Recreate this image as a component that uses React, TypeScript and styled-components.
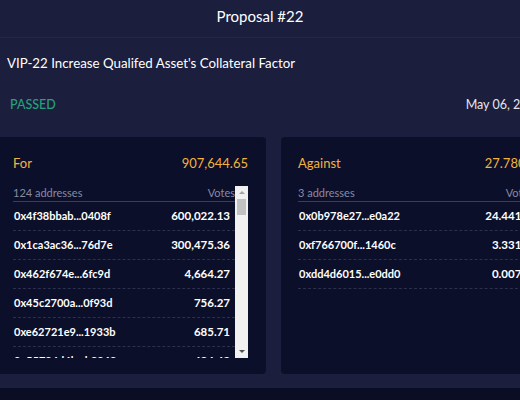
import React from 'react';
import styled, { createGlobalStyle } from 'styled-components';

interface vote {
  address: string
  votes: string
}

const forVotes: vote[] = [
  { address: '0x4f38bbab...0408f', votes: '600,022.13' },
  { address: '0x1ca3ac36...76d7e', votes: '300,475.36' },
  { address: '0x462f674e...6fc9d', votes: '4,664.27' },
  { address: '0x45c2700a...0f93d', votes: '756.27' },
  { address: '0xe62721e9...1933b', votes: '685.71' },
  { address: '0x55784d4b...b8868', votes: '424.42' },
  { address: '0x8a21c0fe...93b1a', votes: '301.05' },
];

const againstVotes: vote[] = [
  { address: '0x0b978e27...e0a22', votes: '24.4418' },
  { address: '0xf766700f...1460c', votes: '3.3312' },
  { address: '0xdd4d6015...e0dd0', votes: '0.0075' },
];

const GlobalStyle = createGlobalStyle`
  body {
    margin: 0;
    background: #0b0d25;
    font-family: Lato, "Open Sans", sans-serif;
  }
`;

const App: React.FC = () => {
  return (
    <>
      <GlobalStyle />
      <Header>Proposal #22</Header>
      <Panel>
        <Inner>
          <Title>VIP-22 Increase Qualifed Asset's Collateral Factor</Title>
          <StatusRow>
            <Status>PASSED</Status>
            <DateText>May 06, 2021</DateText>
          </StatusRow>
          <Cards>
            <VoteCard label="For" total="907,644.65" count={124} list={forVotes} scroll />
            <VoteCard label="Against" total="27.7805" count={3} list={againstVotes} />
          </Cards>
        </Inner>
      </Panel>
    </>
  );
}

const VoteCard: React.FC<{label: string, total: string, count: number, list: vote[], scroll?: boolean}> = ({ label, total, count, list, scroll }) => (
  <Card>
    <CardTop>
      <span>{label}</span>
      <span>{total}</span>
    </CardTop>
    <ListBox>
      <List>
        <ListHead>
          <span>{count} addresses</span>
          <span>Votes</span>
        </ListHead>
        {list.map((item, i) =>
          <Row key={i}>
            <span>{item.address}</span>
            <Value>{item.votes}</Value>
          </Row>
        )}
      </List>
      {scroll &&
        <ScrollBar>
          <ArrowButton><Arrow up /></ArrowButton>
          <Track><Thumb /></Track>
          <ArrowButton><Arrow /></ArrowButton>
        </ScrollBar>
      }
    </ListBox>
  </Card>
);

const Header = styled.div`
  height: 37px;
  line-height: 33px;
  text-align: center;
  color: #ffffff;
  font-size: 15px;
  background: #1b1e3d;
  border-bottom: 1px solid #23274a;
`;

const Panel = styled.div`
  width: 520px;
  overflow: hidden;
  background: #1b1e3d;
`;

const Inner = styled.div`
  width: 560px;
  margin-left: -4px;
  padding: 15px 0 14px;
`;

const Title = styled.div`
  padding-left: 11px;
  font-size: 13.3px;
  line-height: 20px;
  color: #ffffff;
`;

const StatusRow = styled.div`
  display: flex;
  justify-content: space-between;
  align-items: center;
  margin-top: 24px;
  padding: 0 14px;
  font-size: 12.5px;
  line-height: 16px;
`;

const Status = styled.span`
  color: #26a17b;
  font-weight: 500;
`;

const DateText = styled.span`
  color: #e4e5ec;
  white-space: nowrap;
`;

const Cards = styled.div`
  display: grid;
  grid-template-columns: 270px 270px;
  gap: 15px;
  margin-top: 24px;
`;

const Card = styled.div`
  background: #0c0f29;
  border-radius: 4px;
  padding: 18px 18px 16px 17px;
`;

const CardTop = styled.div`
  display: flex;
  justify-content: space-between;
  color: #f2b33f;
  font-size: 13px;
  line-height: 16px;
`;

const ListBox = styled.div`
  display: flex;
  margin-top: 15px;
  height: 172px;
`;

const List = styled.div`
  flex: 1;
  overflow: hidden;
`;

const ListHead = styled.div`
  display: flex;
  justify-content: space-between;
  height: 15px;
  line-height: 14px;
  font-size: 11px;
  color: #878aa3;
  border-bottom: 1px solid #3a3d5c;
`;

const Row = styled.div`
  display: flex;
  justify-content: space-between;
  height: 28px;
  line-height: 28px;
  padding: 0 5px 0 1px;
  font-size: 11px;
  font-weight: 700;
  color: #ffffff;
  border-bottom: 1px dashed #2c2f4e;
`;

const Value = styled.span`
  font-size: 11.5px;
`;

const ScrollBar = styled.div`
  width: 13px;
  display: flex;
  flex-direction: column;
  background: #f1f1f1;
`;

const ArrowButton = styled.div`
  height: 13px;
  display: flex;
  align-items: center;
  justify-content: center;
`;

const Arrow = styled.div<{up?: boolean}>`
  width: 0;
  height: 0;
  border-left: 3px solid transparent;
  border-right: 3px solid transparent;
  ${p => p.up ? 'border-bottom: 3px solid #a3a3a3;' : 'border-top: 3px solid #505050;'}
`;

const Track = styled.div`
  flex: 1;
`;

const Thumb = styled.div`
  height: 16px;
  margin: 0 2px;
  background: #c1c1c1;
`;

export default App;
